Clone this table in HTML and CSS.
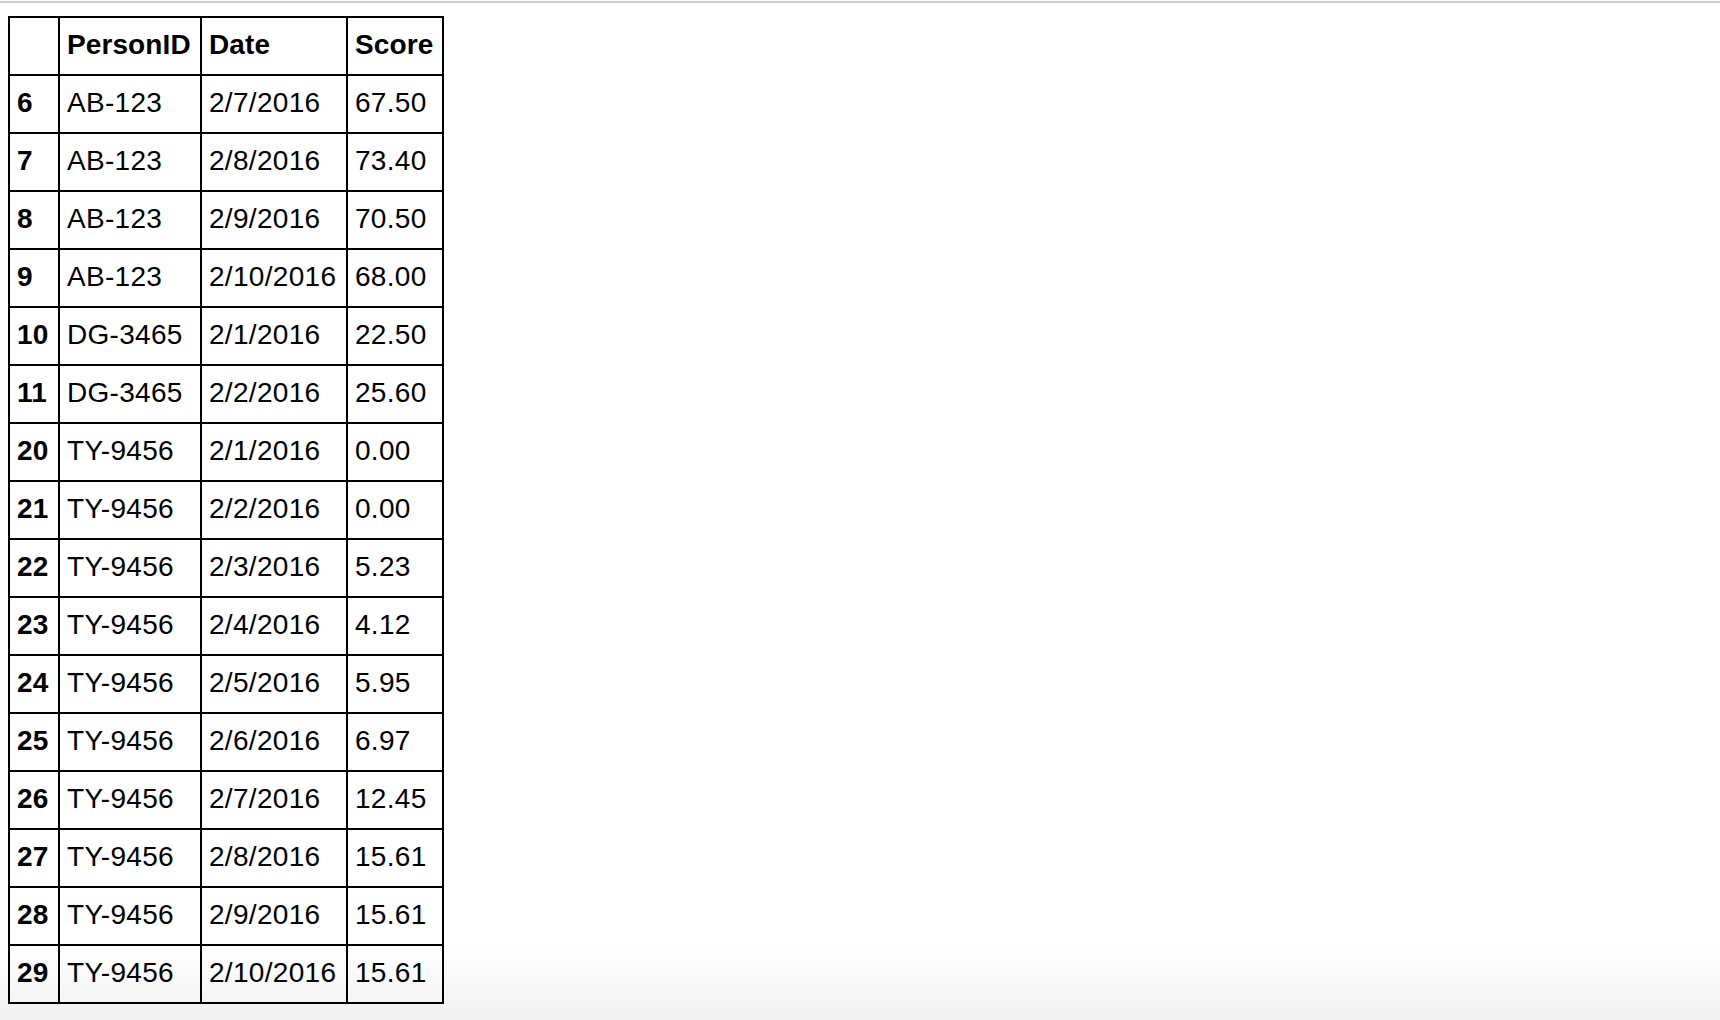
FILE: index.html
```html
<!DOCTYPE html>
<html lang="en">
<head>
<meta charset="utf-8">
<title>Table</title>
<link rel="stylesheet" href="styles.css">
</head>
<body>
<div class="topline"></div>
<table class="df">
  <thead>
    <tr><th class="idx"></th><th class="c-id">PersonID</th><th class="c-date">Date</th><th class="c-score">Score</th></tr>
  </thead>
  <tbody>
    <tr><th>6</th><td>AB-123</td><td>2/7/2016</td><td>67.50</td></tr>
    <tr><th>7</th><td>AB-123</td><td>2/8/2016</td><td>73.40</td></tr>
    <tr><th>8</th><td>AB-123</td><td>2/9/2016</td><td>70.50</td></tr>
    <tr><th>9</th><td>AB-123</td><td>2/10/2016</td><td>68.00</td></tr>
    <tr><th>10</th><td>DG-3465</td><td>2/1/2016</td><td>22.50</td></tr>
    <tr><th>11</th><td>DG-3465</td><td>2/2/2016</td><td>25.60</td></tr>
    <tr><th>20</th><td>TY-9456</td><td>2/1/2016</td><td>0.00</td></tr>
    <tr><th>21</th><td>TY-9456</td><td>2/2/2016</td><td>0.00</td></tr>
    <tr><th>22</th><td>TY-9456</td><td>2/3/2016</td><td>5.23</td></tr>
    <tr><th>23</th><td>TY-9456</td><td>2/4/2016</td><td>4.12</td></tr>
    <tr><th>24</th><td>TY-9456</td><td>2/5/2016</td><td>5.95</td></tr>
    <tr><th>25</th><td>TY-9456</td><td>2/6/2016</td><td>6.97</td></tr>
    <tr><th>26</th><td>TY-9456</td><td>2/7/2016</td><td>12.45</td></tr>
    <tr><th>27</th><td>TY-9456</td><td>2/8/2016</td><td>15.61</td></tr>
    <tr><th>28</th><td>TY-9456</td><td>2/9/2016</td><td>15.61</td></tr>
    <tr><th>29</th><td>TY-9456</td><td>2/10/2016</td><td>15.61</td></tr>
  </tbody>
</table>
</body>
</html>
```

FILE: styles.css
```css
html {
  min-height: 1020px;
  background: linear-gradient(to bottom, #ffffff 0, #ffffff 945px, #f1f1f1 1020px);
  background-repeat: no-repeat;
}
body {
  margin: 0;
  font-family: "Liberation Sans", Arial, sans-serif;
  color: #000;
}
.topline {
  margin-top: 1px;
  height: 2px;
  background: #d0d0d0;
}
.df {
  margin: 13px 0 0 8px;
  border-spacing: 0;
  border-left: 2px solid #000;
  border-top: 2px solid #000;
  table-layout: fixed;
  font-size: 28px;
}
.df th,
.df td {
  box-sizing: border-box;
  height: 58px;
  padding: 0 4px 2px 7px;
  border-right: 2px solid #000;
  border-bottom: 2px solid #000;
  text-align: left;
  vertical-align: middle;
  white-space: nowrap;
  line-height: 1;
}
.df th {
  font-weight: bold;
  letter-spacing: 0.1px;
}
.df td {
  font-weight: normal;
  letter-spacing: 0.3px;
}
.df .idx { width: 50px; }
.df .c-id { width: 142px; }
.df .c-date { width: 146px; }
.df .c-score { width: 96px; }
```
